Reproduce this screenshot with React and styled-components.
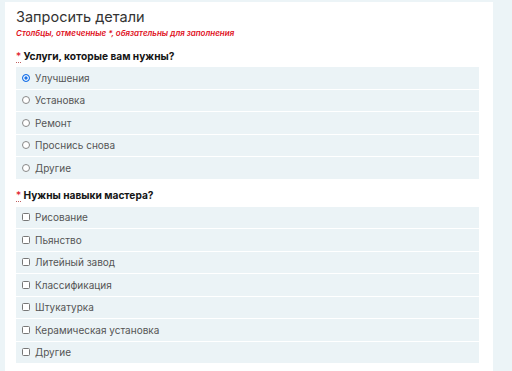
import styled, { createGlobalStyle } from "styled-components";

const GlobalStyle = createGlobalStyle`
  body {
    margin: 0;
    background: #ecf4f7;
    font-family: Inter, "Noto Sans", sans-serif;
  }
`;

const services = ["Улучшения", "Установка", "Ремонт", "Проснись снова", "Другие"];
const skills = [
  "Рисование",
  "Пьянство",
  "Литейный завод",
  "Классификация",
  "Штукатурка",
  "Керамическая установка",
  "Другие",
];

function App() {
  return (
    <Page>
      <GlobalStyle />
      <Card>
        <Title>Запросить детали</Title>
        <Note>Столбцы, отмеченные *, обязательны для заполнения</Note>
        <Question>
          <Star>*</Star> Услуги, которые вам нужны?
        </Question>
        <Options>
          {services.map((s, i) => (
            <Option key={s}>
              <Radio $checked={i === 0} />
              {s}
            </Option>
          ))}
        </Options>
        <Question>
          <Star>*</Star> Нужны навыки мастера?
        </Question>
        <Options>
          {skills.map((s) => (
            <Option key={s}>
              <Box />
              {s}
            </Option>
          ))}
        </Options>
      </Card>
    </Page>
  );
}

const Page = styled.div`
  padding: 2px 19px 0 5px;
  height: 369px;
  overflow: hidden;
`;

const Card = styled.div`
  background: #fff;
  padding: 5px 14px 20px 11px;
`;

const Title = styled.h1`
  margin: 0;
  font-size: 14.5px;
  font-weight: 400;
  color: #333;
  line-height: 20px;
`;

const Note = styled.div`
  color: #e0101c;
  font-size: 8px;
  font-style: italic;
  font-weight: 600;
  line-height: 12px;
`;

const Question = styled.div`
  font-size: 10.2px;
  font-weight: 700;
  color: #151515;
  margin: 9.5px 0 4.5px;
  line-height: 14px;
`;

const Star = styled.span`
  color: #e0101c;
  font-weight: 400;
  border-bottom: 1px dotted #c06060;
`;

const Options = styled.div`
  display: flex;
  flex-direction: column;
  gap: 1px;
`;

const Option = styled.label`
  display: flex;
  align-items: center;
  gap: 5px;
  height: 21.5px;
  padding-left: 6px;
  background: #ebf3f6;
  font-size: 10px;
  color: #555;
`;

const Radio = styled.span`
  width: 6px;
  height: 6px;
  border-radius: 50%;
  border: 1px solid ${(p) => (p.$checked ? "#1a73e8" : "#888")};
  box-shadow: ${(p) => (p.$checked ? "inset 0 0 0 1.3px #fff" : "none")};
  background: ${(p) => (p.$checked ? "#1a73e8" : "#fff")};
`;

const Box = styled.span`
  width: 6px;
  height: 6px;
  border-radius: 1.5px;
  border: 1px solid #777;
  background: #fff;
`;

export default App;
